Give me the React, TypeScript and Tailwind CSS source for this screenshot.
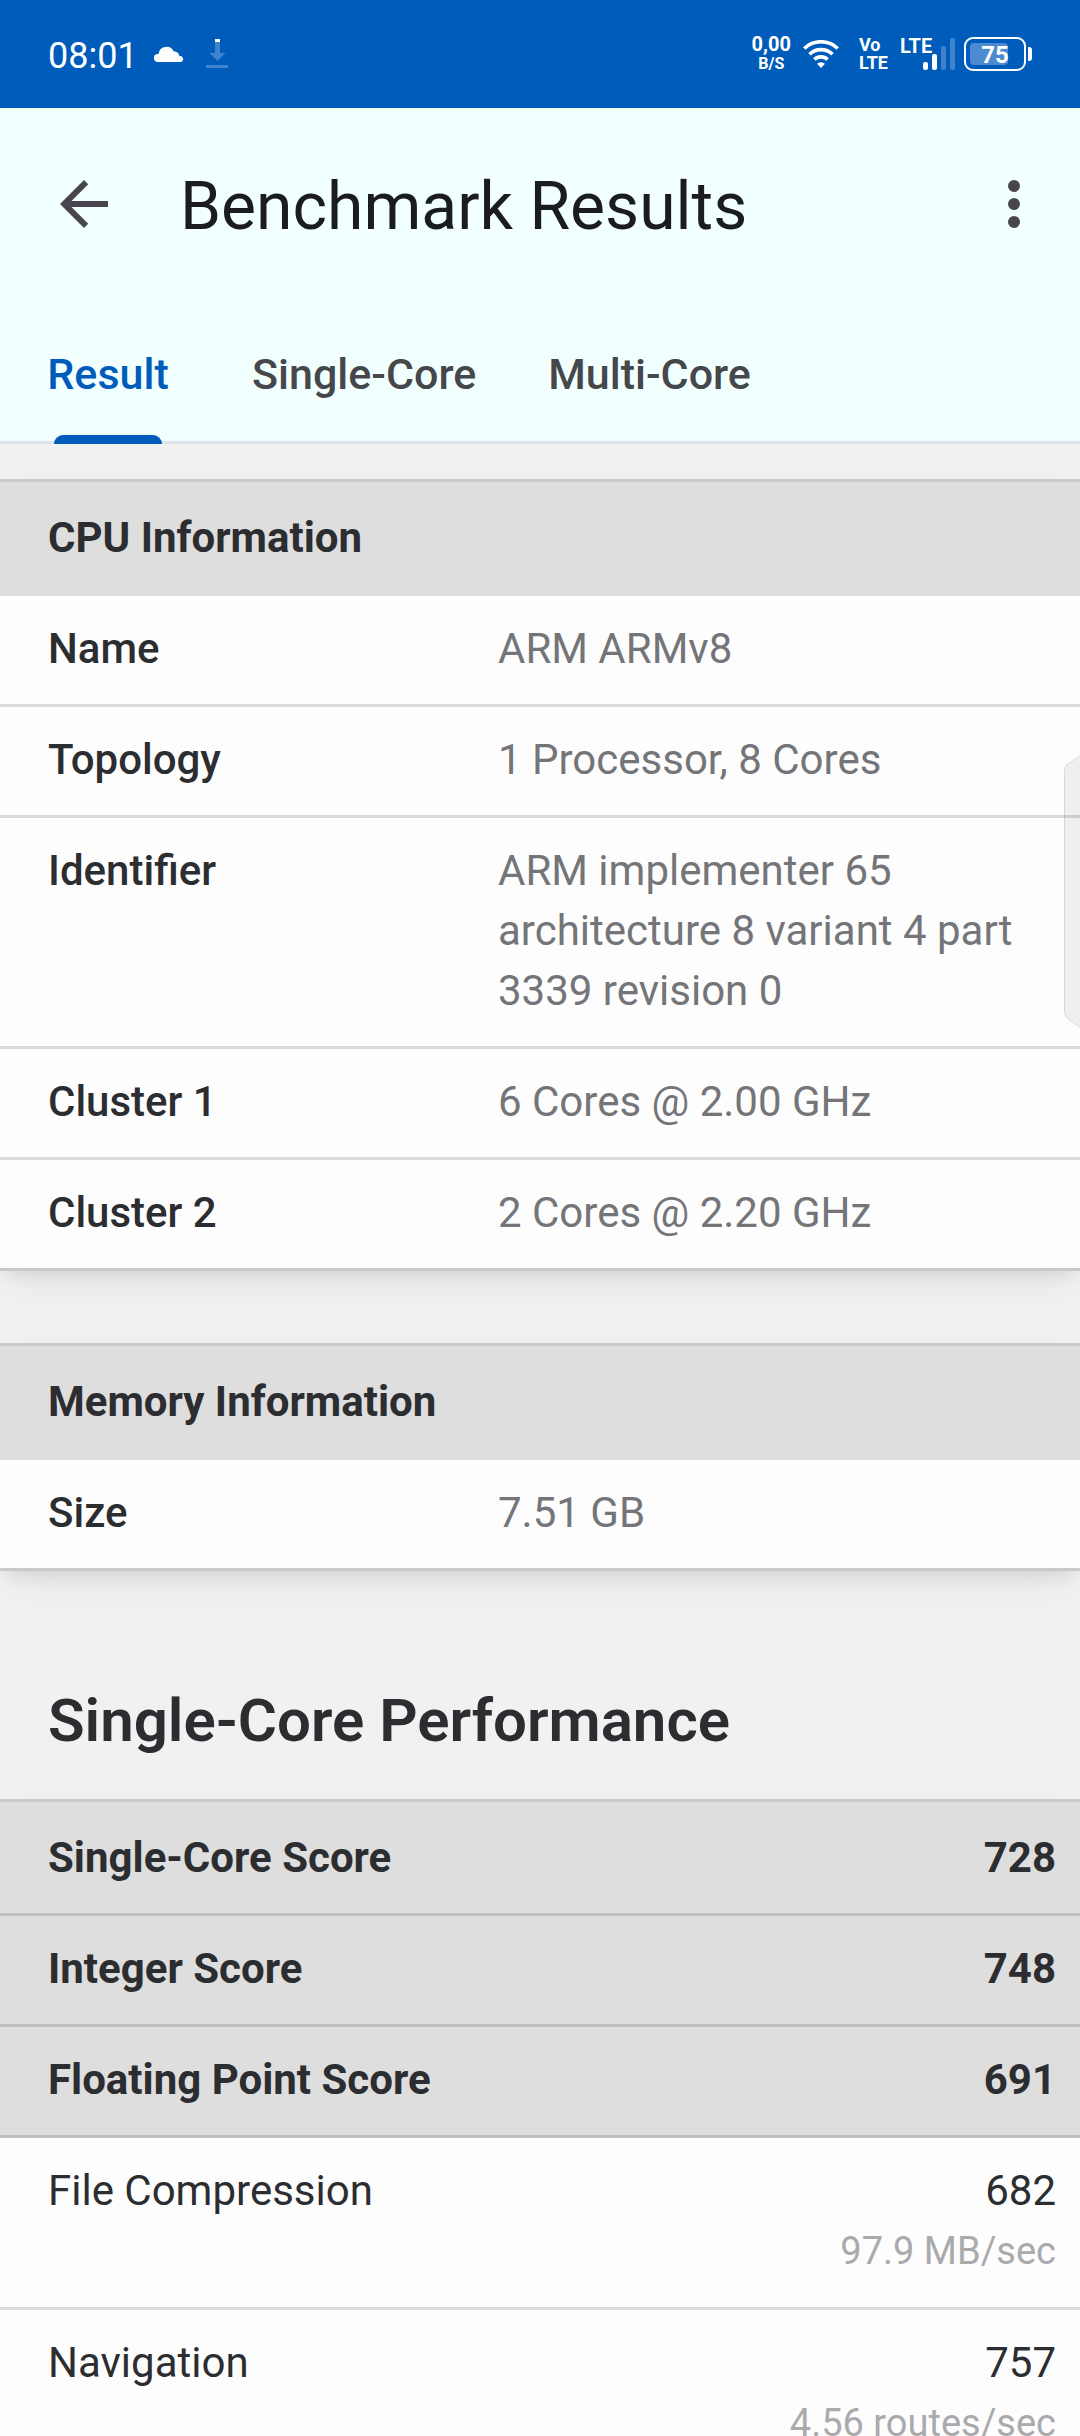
import { useState } from "react";

const tabs = ["Result", "Single-Core", "Multi-Core"];

const cpuInfo = [
  { label: "Name", value: "ARM ARMv8" },
  { label: "Topology", value: "1 Processor, 8 Cores" },
  {
    label: "Identifier",
    value: "ARM implementer 65 architecture 8 variant 4 part 3339 revision 0",
  },
  { label: "Cluster 1", value: "6 Cores @ 2.00 GHz" },
  { label: "Cluster 2", value: "2 Cores @ 2.20 GHz" },
];

const memoryInfo = [{ label: "Size", value: "7.51 GB" }];

const summaryScores = [
  { label: "Single-Core Score", score: 728 },
  { label: "Integer Score", score: 748 },
  { label: "Floating Point Score", score: 691 },
];

const workloads = [
  { label: "File Compression", score: 682, rate: "97.9 MB/sec" },
  { label: "Navigation", score: 757, rate: "4.56 routes/sec" },
];

const cardClass =
  "w-full border-separate border-spacing-0 border-y-3 border-[#c9c9c9] bg-[#fdfdfd] text-left text-[42px] leading-[60px] shadow-[0_10px_16px_-6px_rgba(0,0,0,0.09),0_18px_44px_-8px_rgba(0,0,0,0.06)]";

const StatusBar = () => (
  <div className="flex h-[108px] shrink-0 items-center justify-between bg-[#005cbb] px-12 text-white">
    <div className="flex items-center">
      <span className="pt-[3px] text-[36px] leading-10">08:01</span>
      <svg className="ml-4 h-4 w-[30px]" viewBox="0 0 30 16" fill="currentColor">
        <path d="M4 16a4 4 0 0 1-.2-8H4.500A8 8 0 0 1 19.600 5.300 6.500 6.500 0 0 1 25.500 10.200 3 3 0 0 1 27 16z" />
      </svg>
      <svg className="ml-[22px] h-[30px] w-[22px]" viewBox="0 0 22 30">
        <path d="M9 3h5v11h5.500L11.500 22 3.500 14H9z" fill="#3f83cd" />
        <path d="M9 0h5v3H9z" fill="#fff" />
        <path d="M0 26h22v3H0z" fill="#3f83cd" />
      </svg>
    </div>

    <div className="flex items-center">
      <div className="flex flex-col items-center font-bold">
        <span className="text-[20px] leading-5">0,00</span>
        <span className="text-[16px] leading-5">B/S</span>
      </div>
      <svg className="ml-3 h-7 w-9" viewBox="0 0 36 28" fill="none" stroke="#fff" strokeWidth="3.600">
        <path d="M1.300 8.500a24 24 0 0 1 33.400 0" />
        <path d="M6.500 14.300a16.500 16.500 0 0 1 23 0" />
        <path d="M11.400 19.500a9.500 9.500 0 0 1 13.200 0" />
        <path d="M18 28l-4-4.200a5.800 5.800 0 0 1 8 0z" fill="#fff" stroke="none" />
      </svg>
      <div className="ml-5 flex flex-col text-[18px] font-bold leading-[18px]">
        <span>Vo</span>
        <span>LTE</span>
      </div>
      <div className="relative ml-3 h-8 w-14">
        <span className="absolute top-0 left-0 text-[20px] font-bold leading-4">LTE</span>
        <svg className="absolute right-0 bottom-0 h-8 w-[33px]" viewBox="0 0 33 32">
          <rect x="0" y="24" width="5" height="8" rx="2" fill="#fff" />
          <rect x="9" y="16" width="5" height="16" rx="2" fill="#fff" />
          <rect x="18" y="8" width="5" height="24" rx="2" fill="#3f83cd" />
          <rect x="27" y="0" width="5" height="32" rx="2" fill="#3f83cd" />
        </svg>
      </div>
      <div className="ml-2 flex items-center gap-[2px]">
        <div className="relative h-[34px] w-[62px] rounded-[9px] border-2 border-white p-1">
          <div className="h-full w-[38px] rounded-[4px] bg-[#4d8ad1]" />
          <span className="absolute inset-0 text-center text-[24px] font-bold leading-[32px]">
            75
          </span>
        </div>
        <div className="h-[14px] w-1 rounded-r-[3px] bg-white" />
      </div>
    </div>
  </div>
);

type InfoTableProps = {
  title: string;
  rows: { label: string; value: string }[];
};

const InfoTable = ({ title, rows }: InfoTableProps) => (
  <table className={cardClass}>
    <thead>
      <tr>
        <th colSpan={2} className="bg-[#dedede] px-12 pt-[26px] pb-[28px] font-bold">
          {title}
        </th>
      </tr>
    </thead>
    <tbody className="[&>tr:not(:last-child)>*]:border-b-3">
      {rows.map((row) => (
        <tr key={row.label} className="align-top">
          <th className="w-[45%] border-[#dadada] pt-[23px] pb-[25px] pl-12 font-medium">
            {row.label}
          </th>
          <td className="border-[#dadada] pt-[23px] pr-12 pb-[25px] pl-3 text-[#747579]">
            {row.value}
          </td>
        </tr>
      ))}
    </tbody>
  </table>
);

const ScoreTable = () => (
  <table className={cardClass}>
    <thead className="[&>tr:first-child>*]:pt-[26px]">
      {summaryScores.map((row) => (
        <tr key={row.label}>
          <th className="border-b-3 border-[#c0c0c0] bg-[#dedede] pt-[23px] pb-[25px] pl-12 font-bold">
            {row.label}
          </th>
          <td className="border-b-3 border-[#c0c0c0] bg-[#dedede] pt-[23px] pr-6 pb-[25px] text-right font-bold">
            {row.score}
          </td>
        </tr>
      ))}
    </thead>
    <tbody>
      {workloads.map((row) => (
        <tr key={row.label} className="align-top">
          <th className="border-b-3 border-[#dadada] pt-[23px] pb-[25px] pl-12 font-normal">
            {row.label}
          </th>
          <td className="border-b-3 border-[#dadada] pt-[23px] pr-6 pb-[25px] text-right">
            <div>{row.score}</div>
            <div className="text-[38px] leading-[61px] text-[#aaaaac]">{row.rate}</div>
          </td>
        </tr>
      ))}
    </tbody>
  </table>
);

const App = () => {
  const [activeTab, setActiveTab] = useState("Result");

  return (
    <div className="relative flex h-screen flex-col overflow-hidden bg-[#f1f1f1] font-['Roboto',sans-serif] text-[#2c2d30]">
      <StatusBar />

      <header className="shrink-0 border-b-3 border-[#dfe3e7] bg-[#f2ffff]">
        {/* App bar */}
        <div className="flex h-48 items-center pr-[30px] pl-12 text-[#49454e]">
          <button type="button" aria-label="Back">
            <svg className="size-[72px]" viewBox="0 0 24 24" fill="currentColor">
              <path d="M20 11H7.830l5.590-5.590L12 4l-8 8 8 8 1.410-1.410L7.830 13H20z" />
            </svg>
          </button>
          <h1 className="ml-[60px] flex-1 pt-[6px] text-[66px] leading-[78px] text-[#1b1c1f]">
            Benchmark Results
          </h1>
          <button type="button" aria-label="More options">
            <svg className="size-[72px]" viewBox="0 0 24 24" fill="currentColor">
              <circle cx="12" cy="6" r="2" />
              <circle cx="12" cy="12" r="2" />
              <circle cx="12" cy="18" r="2" />
            </svg>
          </button>
        </div>

        {/* Tabs */}
        <nav role="tablist" className="-mb-[3px] flex h-36">
          {tabs.map((tab) => (
            <button
              key={tab}
              type="button"
              role="tab"
              aria-selected={tab === activeTab}
              onClick={() => setActiveTab(tab)}
              className={`relative min-w-[216px] px-9 pt-1 text-[43px] leading-[60px] font-medium ${
                tab === activeTab ? "text-[#005cbb]" : "text-[#45474b]"
              }`}
            >
              {tab}
              {tab === activeTab && (
                <span className="absolute inset-x-[54px] bottom-0 h-[9px] rounded-t-[9px] bg-[#005cbb]" />
              )}
            </button>
          ))}
        </nav>
      </header>

      <main className="min-h-0 flex-1 overflow-y-auto pt-[35px] [scrollbar-width:none]">
        <div className="flex flex-col gap-[72px]">
          <InfoTable title="CPU Information" rows={cpuInfo} />
          <InfoTable title="Memory Information" rows={memoryInfo} />
        </div>
        <h2 className="px-12 pt-[114px] pb-[42px] text-[60px] leading-[72px] font-semibold">
          Single-Core Performance
        </h2>
        <ScoreTable />
      </main>

      {/* Edge panel handle */}
      <svg className="absolute top-[754px] right-0 h-[275px] w-4" viewBox="0 0 16 275">
        <path
          d="M17 1L3 10.500Q.5 13 .5 17V257Q.5 261 3 264L17 274"
          fill="#000"
          fillOpacity=".055"
          stroke="#000"
          strokeOpacity=".12"
        />
      </svg>
    </div>
  );
};

export default App;
